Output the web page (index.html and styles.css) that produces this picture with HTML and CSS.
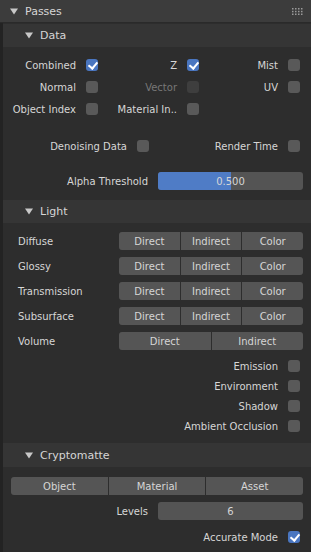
FILE: index.html
```html
<!DOCTYPE html>
<html lang="en">
<head>
    <meta charset="UTF-8">
    <meta name="viewport" content="width=device-width, initial-scale=1.0">
    <title>Passes</title>
    <link rel="stylesheet" href="styles.css">
</head>
<body>

    <!-- Passes panel -->
    <div class="panel-header">
        <svg class="tri" width="8" height="7" viewBox="0 0 8 7"><path d="M0 0.5h8L4 6.5z" fill="#c8c8c8"/></svg>
        <span class="title">Passes</span>
        <svg class="grip" width="11" height="7" viewBox="0 0 11 7">
            <g fill="#9a9a9a">
                <rect x="0" y="0" width="1.5" height="1.5"/><rect x="3" y="0" width="1.5" height="1.5"/><rect x="6" y="0" width="1.5" height="1.5"/><rect x="9" y="0" width="1.5" height="1.5"/>
                <rect x="0" y="2.8" width="1.5" height="1.5"/><rect x="3" y="2.8" width="1.5" height="1.5"/><rect x="6" y="2.8" width="1.5" height="1.5"/><rect x="9" y="2.8" width="1.5" height="1.5"/>
                <rect x="0" y="5.5" width="1.5" height="1.5"/><rect x="3" y="5.5" width="1.5" height="1.5"/><rect x="6" y="5.5" width="1.5" height="1.5"/><rect x="9" y="5.5" width="1.5" height="1.5"/>
            </g>
        </svg>
    </div>

    <div class="panel-body">

        <!-- Data -->
        <div class="sub-header">
            <svg class="tri" width="8" height="7" viewBox="0 0 8 7"><path d="M0 0.5h8L4 6.5z" fill="#c8c8c8"/></svg>
            <span>Data</span>
        </div>
        <div class="section data">
            <div class="grid3">
                <div class="check-item"><span>Combined</span><span class="box on"></span></div>
                <div class="check-item"><span>Z</span><span class="box on"></span></div>
                <div class="check-item"><span>Mist</span><span class="box"></span></div>

                <div class="check-item"><span>Normal</span><span class="box"></span></div>
                <div class="check-item disabled"><span>Vector</span><span class="box"></span></div>
                <div class="check-item"><span>UV</span><span class="box"></span></div>

                <div class="check-item"><span>Object Index</span><span class="box"></span></div>
                <div class="check-item"><span>Material In..</span><span class="box"></span></div>
                <div class="check-item"></div>
            </div>

            <div class="grid2">
                <div class="check-item"><span>Denoising Data</span><span class="box"></span></div>
                <div class="check-item"><span>Render Time</span><span class="box"></span></div>
            </div>

            <div class="prop-row">
                <span class="prop-label">Alpha Threshold</span>
                <div class="slider"><div class="fill" style="width: 50%"></div><span>0.500</span></div>
            </div>
        </div>

        <!-- Light -->
        <div class="sub-header">
            <svg class="tri" width="8" height="7" viewBox="0 0 8 7"><path d="M0 0.5h8L4 6.5z" fill="#c8c8c8"/></svg>
            <span>Light</span>
        </div>
        <div class="section light">
            <div class="light-row">
                <span>Diffuse</span>
                <div class="btn-group"><button>Direct</button><button>Indirect</button><button>Color</button></div>
            </div>
            <div class="light-row">
                <span>Glossy</span>
                <div class="btn-group"><button>Direct</button><button>Indirect</button><button>Color</button></div>
            </div>
            <div class="light-row">
                <span>Transmission</span>
                <div class="btn-group"><button>Direct</button><button>Indirect</button><button>Color</button></div>
            </div>
            <div class="light-row">
                <span>Subsurface</span>
                <div class="btn-group"><button>Direct</button><button>Indirect</button><button>Color</button></div>
            </div>
            <div class="light-row">
                <span>Volume</span>
                <div class="btn-group"><button>Direct</button><button>Indirect</button></div>
            </div>

            <div class="check-list">
                <div class="check-item"><span>Emission</span><span class="box"></span></div>
                <div class="check-item"><span>Environment</span><span class="box"></span></div>
                <div class="check-item"><span>Shadow</span><span class="box"></span></div>
                <div class="check-item"><span>Ambient Occlusion</span><span class="box"></span></div>
            </div>
        </div>

        <!-- Cryptomatte -->
        <div class="sub-header crypto-header">
            <svg class="tri" width="8" height="7" viewBox="0 0 8 7"><path d="M0 0.5h8L4 6.5z" fill="#c8c8c8"/></svg>
            <span>Cryptomatte</span>
        </div>
        <div class="section crypto">
            <div class="btn-group wide"><button>Object</button><button>Material</button><button>Asset</button></div>
            <div class="prop-row">
                <span class="prop-label">Levels</span>
                <div class="slider"><span>6</span></div>
            </div>
            <div class="check-item accurate"><span>Accurate Mode</span><span class="box on"></span></div>
        </div>

    </div>

</body>
</html>
```

FILE: styles.css
```css
* {
    box-sizing: border-box;
}
body {
    margin: 0;
    background-color: #232323;
    font-family: "DejaVu Sans", sans-serif;
    font-size: 10px;
    color: #d6d6d6;
    height: 552px;
    display: flex;
    flex-direction: column;
    overflow: hidden;
}
.panel-header {
    height: 23px;
    flex-shrink: 0;
    background-color: #3c3c3c;
    display: flex;
    align-items: center;
    padding: 0 8px 0 10px;
    border-bottom: 1px solid #2a2a2a;
}
.panel-header .title {
    font-size: 11px;
    margin-left: 7px;
    flex: 1;
}
.panel-body {
    flex: 1;
    margin-left: 3px;
    padding-top: 1px;
    background-color: #2d2d2d;
}
.sub-header {
    height: 23px;
    background-color: #353535;
    display: flex;
    align-items: center;
    padding-left: 22px;
    font-size: 11px;
}
.sub-header .tri {
    margin-right: 7px;
}
.crypto-header {
    height: 24px;
}
.section {
    padding-right: 11px;
}
.data {
    padding-top: 7px;
    padding-bottom: 10px;
}
.grid3 {
    display: grid;
    grid-template-columns: 95px 101px 101px;
}
.grid2 {
    display: grid;
    grid-template-columns: 146px 151px;
    margin-top: 15px;
}
.check-item {
    height: 22px;
    display: flex;
    align-items: center;
    justify-content: flex-end;
    gap: 10px;
}
.check-item.disabled {
    color: #777777;
}
.box {
    width: 12px;
    height: 12px;
    border-radius: 3px;
    background-color: #595959;
    flex-shrink: 0;
    position: relative;
}
.disabled .box {
    background-color: #3e3e3e;
}
.box.on {
    background-color: #4a76c0;
}
.box.on::after {
    content: "";
    position: absolute;
    left: 4px;
    top: 1px;
    width: 4px;
    height: 7px;
    border: solid #ffffff;
    border-width: 0 2px 2px 0;
    transform: rotate(40deg);
}
.prop-row {
    display: flex;
    align-items: center;
    height: 18px;
    margin-top: 15px;
    margin-right: -3px;
}
.prop-label {
    width: 155px;
    text-align: right;
    padding-right: 10px;
}
.slider {
    flex: 1;
    height: 18px;
    border-radius: 3px;
    background-color: #545454;
    position: relative;
    overflow: hidden;
    display: flex;
    align-items: center;
    justify-content: center;
}
.slider .fill {
    position: absolute;
    left: 0;
    top: 0;
    bottom: 0;
    background-color: #4f7cc6;
}
.slider span {
    position: relative;
}
.light {
    padding-top: 9px;
    padding-bottom: 7px;
    padding-right: 8px;
}
.light-row {
    display: flex;
    align-items: center;
    height: 18px;
    margin-bottom: 7px;
}
.light-row span {
    width: 116px;
    padding-left: 15px;
}
.btn-group {
    flex: 1;
    display: flex;
    height: 18px;
    gap: 1px;
    background-color: #2d2d2d;
    border-radius: 3px;
    overflow: hidden;
}
.btn-group button {
    flex: 1;
    border: none;
    margin: 0;
    padding: 0;
    background-color: #555555;
    color: #d6d6d6;
    font-family: "DejaVu Sans", sans-serif;
    font-size: 10px;
}
.light-row:nth-child(5) {
    margin-bottom: 6px;
}
.check-list {
    margin-right: 3px;
}
.check-list .check-item {
    height: 20px;
}
.crypto {
    padding-top: 10px;
    padding-left: 8px;
    padding-right: 8px;
}
.crypto .btn-group {
    flex: none;
}
.crypto .prop-row {
    margin-top: 7px;
    margin-right: 0;
}
.crypto .prop-label {
    width: 147px;
}
.accurate {
    margin-top: 6px;
    margin-right: 3px;
}
```
